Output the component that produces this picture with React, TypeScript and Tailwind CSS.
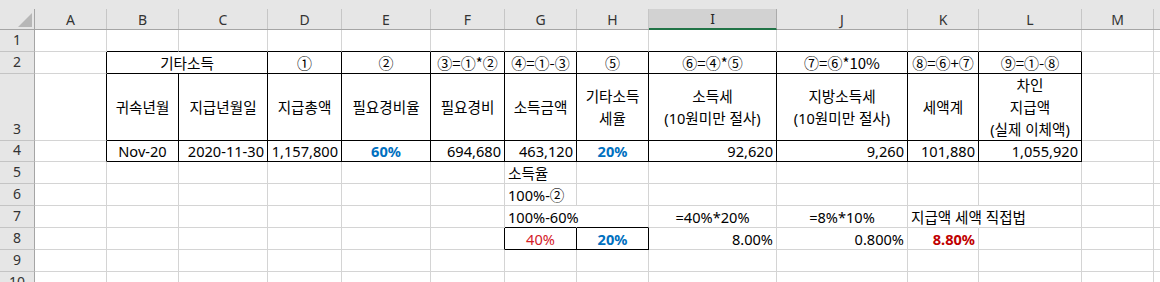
import React from 'react';

type Cell = { t: string; a?: 'l' | 'c' | 'r'; x?: string };

const LETTERS = ['A', 'B', 'C', 'D', 'E', 'F', 'G', 'H', 'I', 'J', 'K', 'L', 'M', ''];
const BLUE = 'font-bold text-[#0070c0]';
const CJK = "font-['Noto_Sans_CJK_KR',sans-serif] text-[15px] text-black";

const data: Record<string, Cell> = {
  '2,2': { t: '기타소득', a: 'c' },
  '2,4': { t: '①', a: 'c', x: CJK },
  '2,5': { t: '②', a: 'c', x: CJK },
  '2,6': { t: '③=①*②', a: 'c', x: CJK },
  '2,7': { t: '④=①-③', a: 'c', x: CJK },
  '2,8': { t: '⑤', a: 'c', x: CJK },
  '2,9': { t: '⑥=④*⑤', a: 'c', x: CJK },
  '2,10': { t: '⑦=⑥*10%', a: 'c', x: CJK },
  '2,11': { t: '⑧=⑥+⑦', a: 'c', x: CJK },
  '2,12': { t: '⑨=①-⑧', a: 'c', x: CJK },
  '3,2': { t: '귀속년월', a: 'c' },
  '3,3': { t: '지급년월일', a: 'c' },
  '3,4': { t: '지급총액', a: 'c' },
  '3,5': { t: '필요경비율', a: 'c' },
  '3,6': { t: '필요경비', a: 'c' },
  '3,7': { t: '소득금액', a: 'c' },
  '3,8': { t: '기타소득\n세율', a: 'c' },
  '3,9': { t: '소득세\n(10원미만 절사)', a: 'c' },
  '3,10': { t: '지방소득세\n(10원미만 절사)', a: 'c' },
  '3,11': { t: '세액계', a: 'c' },
  '3,12': { t: '차인\n지급액\n(실제 이체액)', a: 'c' },
  '4,2': { t: 'Nov-20', a: 'c' },
  '4,3': { t: '2020-11-30', a: 'r' },
  '4,4': { t: '1,157,800', a: 'r' },
  '4,5': { t: '60%', a: 'c', x: BLUE },
  '4,6': { t: '694,680', a: 'r' },
  '4,7': { t: '463,120', a: 'r' },
  '4,8': { t: '20%', a: 'c', x: BLUE },
  '4,9': { t: '92,620', a: 'r' },
  '4,10': { t: '9,260', a: 'r' },
  '4,11': { t: '101,880', a: 'r' },
  '4,12': { t: '1,055,920', a: 'r' },
  '5,7': { t: '소득율' },
  '6,7': { t: '100%-②' },
  '7,7': { t: '100%-60%' },
  '7,9': { t: '=40%*20%', a: 'c' },
  '7,10': { t: '=8%*10%', a: 'c' },
  '7,11': { t: '지급액 세액 직접법' },
  '8,7': { t: '40%', a: 'c', x: 'text-[#d42027]' },
  '8,8': { t: '20%', a: 'c', x: BLUE },
  '8,9': { t: '8.00%', a: 'r' },
  '8,10': { t: '0.800%', a: 'r' },
  '8,11': { t: '8.80%', a: 'r', x: 'font-bold text-[#c00000]' },
};

const boxed = (r: number, c: number) =>
  (r >= 2 && r <= 4 && c >= 2 && c <= 12) || (r === 8 && (c === 7 || c === 8));

// text spills over the next cell, so Excel hides that gridline
const spills = (r: number, c: number) => r === 7 && (c === 7 || c === 11);

function DataCell({ r, c }: { r: number; c: number }) {
  const cell = data[`${r},${c}`];
  const span = r === 2 && c === 2;
  const endC = span ? c + 1 : c;
  const right = boxed(r, endC) || boxed(r, endC + 1)
    ? 'border-r-black'
    : spills(r, c)
      ? 'border-r-transparent'
      : 'border-r-[#d4d4d4]';
  const bottom = boxed(r, c) || boxed(r + 1, c) ? 'border-b-black' : 'border-b-[#d4d4d4]';
  const align = cell?.a === 'c' ? 'justify-center text-center' : cell?.a === 'r' ? 'justify-end text-right' : 'justify-start';
  return (
    <div
      className={`flex items-center px-[3px] border-r border-b whitespace-pre leading-[22px] ${right} ${bottom} ${align} ${span ? 'col-span-2' : ''} ${cell?.x ?? 'text-black'}`}
    >
      {cell?.t}
    </div>
  );
}

function RowHead({ n }: { n: number }) {
  return (
    <div className="flex items-end justify-center bg-[#e6e6e6] border-r border-r-[#a5a5a5] border-b border-b-[#c4c4c4] text-[14px] leading-[20px] pb-px text-[#333]">
      {n}
    </div>
  );
}

export default function App() {
  const rows = [1, 2, 3, 4, 5, 6, 7, 8, 9, 10];
  return (
    <div className="w-[1160px] h-[282px] overflow-hidden bg-white font-['Noto_Sans','Noto_Sans_CJK_KR',sans-serif] text-[14.6px]">
      <div className="grid grid-cols-[35px_72px_72px_89px_74px_89px_74px_72px_72px_128px_131px_71px_103px_72px_1fr] grid-rows-[30px_22px_22px_67px_21px_22px_22px_22px_22px_22px_22px]">
        {/* corner */}
        <div className="bg-[#e6e6e6] pt-[9px] border-b border-b-[#a5a5a5]">
          <div className="h-full border-r border-r-[#a5a5a5]">
            <svg width="34" height="21" viewBox="0 0 34 21">
              <polygon points="32,4 32,18 18,18" fill="#b7b7b7" />
            </svg>
          </div>
        </div>
        {LETTERS.map((l, i) =>
          l === 'I' ? (
            <div key={i} className="bg-[#e6e6e6] pt-[9px]">
              <div className="h-full flex items-center justify-center bg-[#d2d2d2] border-r border-r-[#ababab] border-b-2 border-b-[#217346] text-[14px] text-[#262626]">
                {l}
              </div>
            </div>
          ) : (
            <div key={i} className="bg-[#e6e6e6] pt-[9px] border-b border-b-[#a5a5a5]">
              <div className="h-full flex items-center justify-center border-r border-r-[#c6c6c6] text-[14px] text-[#333]">
                {l}
              </div>
            </div>
          ),
        )}
        {rows.map((r) => (
          <React.Fragment key={r}>
            <RowHead n={r} />
            {LETTERS.map((_, i) => {
              const c = i + 1;
              if (r === 2 && c === 3) return null;
              return <DataCell key={c} r={r} c={c} />;
            })}
          </React.Fragment>
        ))}
      </div>
    </div>
  );
}
